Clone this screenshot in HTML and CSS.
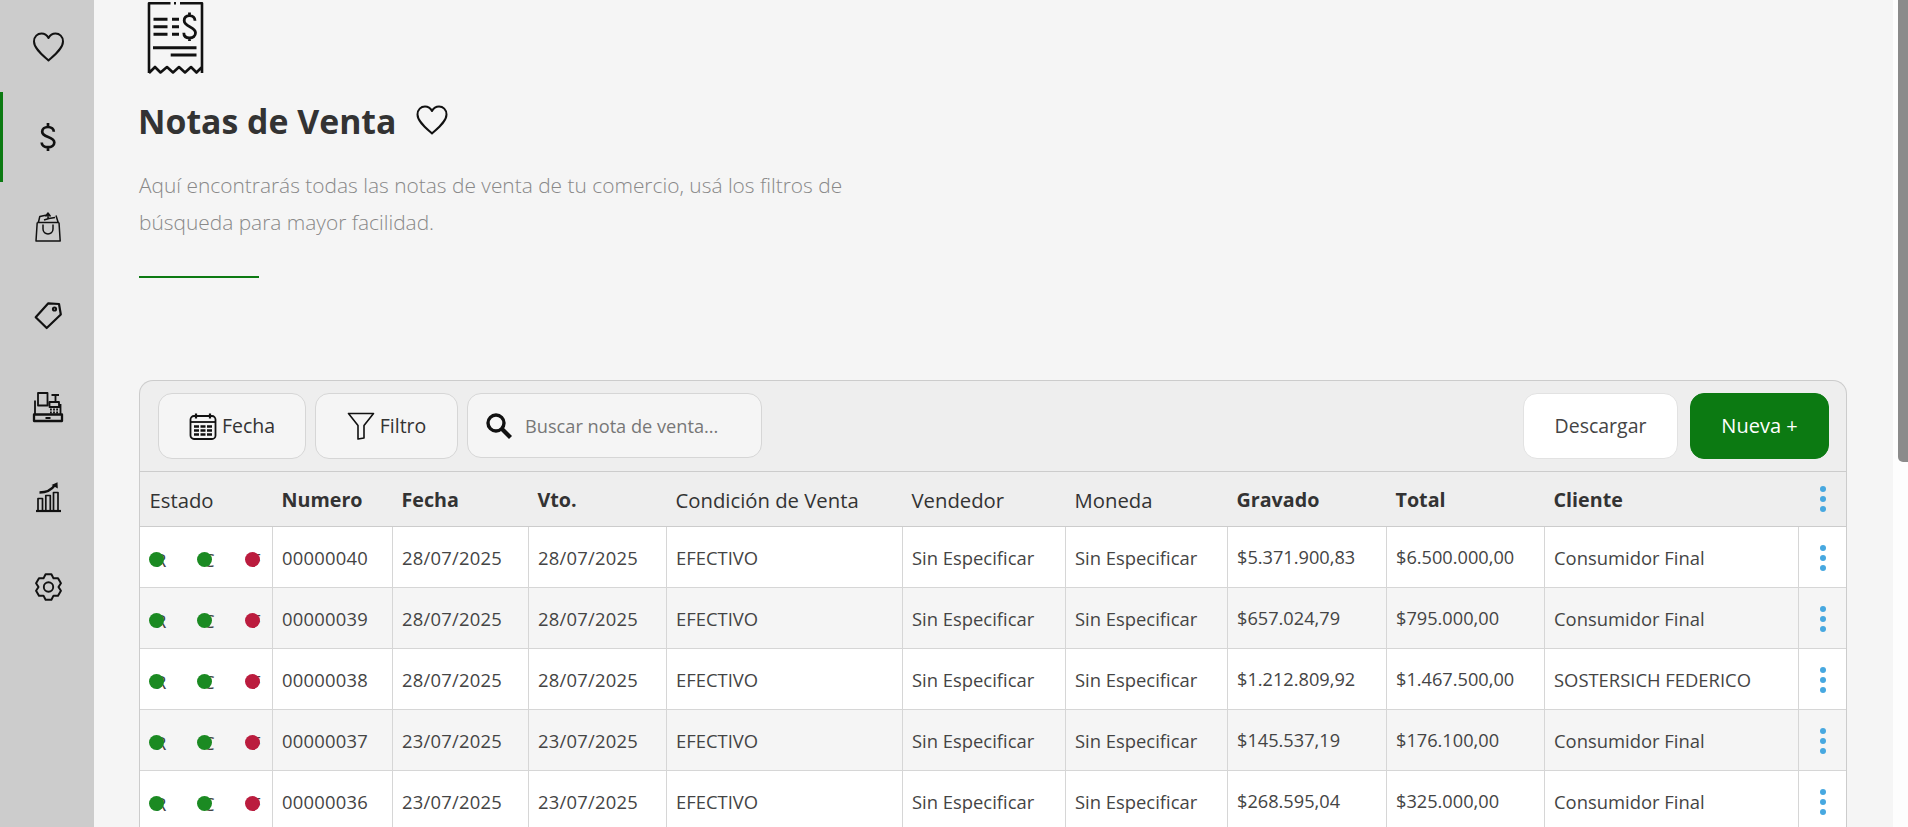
FILE: index.html
```html
<!DOCTYPE html>
<html lang="es">
<head>
<meta charset="utf-8">
<title>Notas de Venta</title>
<link rel="stylesheet" href="styles.css">
</head>
<body>
<div class="app">
  <nav class="sidebar">
    <a class="nav-item"><svg width="32" height="32" viewBox="0.5 0 32 32"><path class="ln" d="M16 29.500C10 24 1.500 17.500 1.500 10.500 1.500 5.500 5 2.500 9 2.500c3 0 5.500 1.700 7 4.500 1.500-2.800 4-4.500 7-4.500 4 0 7.500 3 7.500 8 0 7-8.500 13.500-14.500 19Z" stroke-width="2"/></svg></a>
    <a class="nav-item nav-item-active"><svg width="32" height="32" viewBox="1 0 32 32"><path class="ln" d="M21.800 10.800C21.800 7.900 19.400 6 16 6s-5.800 1.900-5.800 4.700c0 6.300 12.100 4.300 12.100 10.800 0 2.800-2.600 4.700-6.300 4.700s-6.300-1.900-6.300-4.700M16 2v4M16 26.200V30" stroke-width="2.700"/></svg></a>
    <a class="nav-item"><svg width="26" height="30" viewBox="1 0 26 30"><path class="ln" d="M2.200 10.500 1 29h24.200L24 10.500M8 12.500v4.500c0 6.500 10 6.500 10 0v-4.500M2.200 10.500H24M3.500 10 4.800 4.500l7-1.500M21 3.500l2 6.500M13 1.500v6M10.500 4.500 13 1l2.500 3.500M9 8l5-1.500 6-1" stroke-width="1.500"/></svg></a>
    <a class="nav-item"><svg width="28" height="27" viewBox="1 2 28 27"><path class="ln" d="M14.300 1.300 25 2l1.800 10.500L12.700 26 1.700 15.300Z" stroke-width="2.200"/><circle class="ln" cx="20.500" cy="7" r="1.600" stroke-width="2"/></svg></a>
    <a class="nav-item"><svg width="30" height="30" viewBox="1 0 30 30"><path class="ln" d="M2 8.500V22M5 1h9.500v12.500H5ZM16.500 10h9.500v5h-9.500ZM18.500 3h7.500M22.500 3v7M27.500 12v10" stroke-width="1.800"/><path class="ln" d="M1 22.500h28V29H1Z" stroke-width="2.300"/><path class="ln" d="M12.500 26h5" stroke-width="2"/><path class="ln" d="M17 17.500h9M17 20.500h9" stroke-width="1.800" stroke-dasharray="1.800 1.300"/></svg></a>
    <a class="nav-item"><svg width="26" height="30" viewBox="0 0 26 30"><path class="ln" d="M0 29h25" stroke-width="2.200"/><path class="ln" d="M2 28.500V16.500h4.500v12M9.800 28.500V13.500h4.500v15M17.500 28.500V10.500H22v18" stroke-width="1.700"/><path class="ln" d="M3.500 10.500c6.500 0 12-2.500 15.500-7.500" stroke-width="2.300"/><path class="fl" d="M15.500 3 21.500.3l.3 6.200Z"/></svg></a>
    <a class="nav-item"><svg width="28" height="28" viewBox="0.5 0 28 28"><circle class="ln" cx="14" cy="14" r="4.700" stroke-width="1.900"/><path class="ln" d="M11.080 1.330H16.920L19 5.340 23.510 5.130 26.430 10.200 24 14 26.430 17.800 23.510 22.870 19 22.660 16.920 26.670H11.080L9 22.660 4.490 22.870 1.570 17.800 4 14 1.570 10.200 4.490 5.130 9 5.340Z" stroke-width="2"/></svg></a>
  </nav>
  <main class="main">
    <header class="page-head">
      <svg class="receipt" width="58" height="75" viewBox="0 0 58 75"><path class="ln" d="M2 73V3.200H23.500M27 3.200H29M33 3.200H55V73M2 73 8 67 13.500 72.500 20 67 26 72.500 32 67 38 72.500 44 67 49.500 72.500 55 67" stroke-width="2.600"/><path class="ln" d="M6.500 19.300h14M6.500 26.700h14M6.500 34.300h14M25 19.300h7M25 26.700h7M25 34.300h7M6 47.700h43.500M23.700 55h25.800" stroke-width="3"/><path class="ln" d="M48 20.800C48 17.500 45.800 15.700 42.500 15.700S37.200 17.700 37.200 20.800C37.200 27.300 48.500 26 48.500 32.800 48.500 36 46 38 42.500 38S36.800 36 36.800 32.800M42.500 12.500V15.700M42.500 38V41" stroke-width="2.800"/></svg>
      <div class="title-row">
        <h1 class="title">Notas de Venta</h1>
        <svg class="title-heart" width="32" height="32" viewBox="0 0 32 32"><path class="ln" d="M16 29.500C10 24 1.500 17.500 1.500 10.500 1.500 5.500 5 2.500 9 2.500c3 0 5.500 1.700 7 4.500 1.500-2.800 4-4.500 7-4.500 4 0 7.500 3 7.500 8 0 7-8.500 13.500-14.500 19Z" stroke-width="2"/></svg>
      </div>
      <p class="desc">Aquí encontrarás todas las notas de venta de tu comercio, usá los filtros de<br>búsqueda para mayor facilidad.</p>
      <div class="rule"></div>
    </header>
    <section class="panel">
      <div class="toolbar">
        <button class="btn btn-fecha"><svg width="28" height="28" viewBox="0 0 28 28"><rect class="ln" x="1.500" y="4" width="25" height="23" rx="3.500" stroke-width="1.800"/><path class="ln" d="M1.500 10h25" stroke-width="1.800"/><path class="ln" d="M7 1.500v5M21 1.500v5" stroke-width="2.200"/><path class="ln" d="M5 14.500h18M5 18.500h18M5 22.500h18" stroke-width="2.600" stroke-dasharray="5 1.500"/></svg>Fecha</button>
        <button class="btn btn-filtro"><svg width="28" height="28" viewBox="0 0 28 28"><path class="ln" d="M1.500 1.500h25L17 13.500v12.500l-6 1V13.500L1.500 1.500Z" stroke-width="1.600"/></svg>Filtro</button>
        <label class="search"><svg width="28" height="28" viewBox="0 0 28 28"><circle class="ln" cx="11" cy="11" r="8" stroke-width="3.400"/><path class="ln" d="m17 17 8.500 8.500" stroke-width="4.200"/></svg><span class="search-ph">Buscar nota de venta...</span></label>
        <div class="spacer"></div>
        <button class="btn btn-white">Descargar</button>
        <button class="btn btn-green">Nueva +</button>
      </div>
      <table class="grid">
        <colgroup>
          <col class="c-estado"><col class="c-num"><col class="c-fecha"><col class="c-vto"><col class="c-cond"><col class="c-vend"><col class="c-mon"><col class="c-grav"><col class="c-total"><col class="c-cli"><col class="c-act">
        </colgroup>
        <thead>
          <tr>
            <th class="th-mid">Estado</th><th>Numero</th><th>Fecha</th><th>Vto.</th><th class="th-mid">Condición de Venta</th><th class="th-mid">Vendedor</th><th class="th-mid">Moneda</th><th>Gravado</th><th>Total</th><th>Cliente</th>
            <th class="act"><span class="kebab"><i></i><i></i><i></i></span></th>
          </tr>
        </thead>
        <tbody>
          <tr>
            <td class="states"><span class="st st-g">R</span><span class="st st-g">C</span><span class="st st-r">F</span></td>
            <td>00000040</td><td>28/07/2025</td><td>28/07/2025</td><td>EFECTIVO</td><td>Sin Especificar</td><td>Sin Especificar</td><td>$5.371.900,83</td><td>$6.500.000,00</td><td>Consumidor Final</td>
            <td class="act"><span class="kebab"><i></i><i></i><i></i></span></td>
          </tr>
          <tr>
            <td class="states"><span class="st st-g">R</span><span class="st st-g">C</span><span class="st st-r">F</span></td>
            <td>00000039</td><td>28/07/2025</td><td>28/07/2025</td><td>EFECTIVO</td><td>Sin Especificar</td><td>Sin Especificar</td><td>$657.024,79</td><td>$795.000,00</td><td>Consumidor Final</td>
            <td class="act"><span class="kebab"><i></i><i></i><i></i></span></td>
          </tr>
          <tr>
            <td class="states"><span class="st st-g">R</span><span class="st st-g">C</span><span class="st st-r">F</span></td>
            <td>00000038</td><td>28/07/2025</td><td>28/07/2025</td><td>EFECTIVO</td><td>Sin Especificar</td><td>Sin Especificar</td><td>$1.212.809,92</td><td>$1.467.500,00</td><td>SOSTERSICH FEDERICO</td>
            <td class="act"><span class="kebab"><i></i><i></i><i></i></span></td>
          </tr>
          <tr>
            <td class="states"><span class="st st-g">R</span><span class="st st-g">C</span><span class="st st-r">F</span></td>
            <td>00000037</td><td>23/07/2025</td><td>23/07/2025</td><td>EFECTIVO</td><td>Sin Especificar</td><td>Sin Especificar</td><td>$145.537,19</td><td>$176.100,00</td><td>Consumidor Final</td>
            <td class="act"><span class="kebab"><i></i><i></i><i></i></span></td>
          </tr>
          <tr>
            <td class="states"><span class="st st-g">R</span><span class="st st-g">C</span><span class="st st-r">F</span></td>
            <td>00000036</td><td>23/07/2025</td><td>23/07/2025</td><td>EFECTIVO</td><td>Sin Especificar</td><td>Sin Especificar</td><td>$268.595,04</td><td>$325.000,00</td><td>Consumidor Final</td>
            <td class="act"><span class="kebab"><i></i><i></i><i></i></span></td>
          </tr>
        </tbody>
      </table>
    </section>
  </main>
  <div class="scrolltrack"><div class="scrollthumb"></div></div>
</div>
</body>
</html>
```
FILE: styles.css
```css
* { box-sizing: border-box; }
html, body { margin: 0; height: 100%; overflow: hidden; }
body { font-family: "Open Sans", "Noto Sans", sans-serif; color: #333; background: #f5f5f5; }
.ln { fill: none; stroke: #111; stroke-linejoin: round; }
.fl { fill: #111; }
.app { display: flex; height: 827px; overflow: hidden; }

.sidebar { width: 94px; flex: none; background: #ccc; padding-top: 2px; display: flex; flex-direction: column; }
.nav-item { height: 90px; flex: none; display: flex; align-items: center; justify-content: center; border-left: 3px solid transparent; }
.nav-item svg { overflow: visible; }
.nav-item-active { border-left-color: #0c7a12; }

.main { flex: 1; min-width: 0; padding: 0 46px 0 45px; }
.page-head { display: flex; flex-direction: column; align-items: flex-start; }
.receipt { margin-left: 8px; display: block; }
.title-row { display: flex; align-items: center; gap: 20px; margin-top: 17px; height: 58px; }
.title { margin: 0 0 0 -1px; font-size: 33.800px; font-weight: 700; line-height: 58px; color: #333; }
.title-heart { margin-top: -3px; }
.desc { margin: 16.500px 0 0; font-size: 20.900px; font-weight: 300; line-height: 37.500px; color: #888; }
.rule { width: 120px; height: 2px; background: #0c7a12; margin-top: 34.500px; }

.panel { margin-top: 101.500px; border: 1.500px solid #ccc; border-bottom: 0; border-radius: 14px 14px 0 0; background: #eee; }
.toolbar { display: flex; align-items: center; gap: 9px; height: 90.500px; padding: 0 17px 0 18px; }
.spacer { flex: 1; }
.btn { height: 66px; border: 1.500px solid #d6d6d6; border-radius: 14px; background: #f5f5f5; color: #333; font: 500 19.500px "Open Sans", sans-serif; display: inline-flex; align-items: center; justify-content: center; gap: 5px; padding: 0; }
.btn-fecha { width: 148px; }
.btn-filtro { width: 143px; }
.search { width: 295px; height: 65px; border: 1.500px solid #d6d6d6; border-radius: 14px; background: #f5f5f5; display: flex; align-items: center; gap: 12px; padding-left: 17px; }
.search-ph { font-size: 18.200px; color: #777; }
.btn-white { width: 155px; background: #fff; border-color: #e2e2e2; color: #444; font-weight: 400; }
.btn-green { width: 139px; background: #0c7a12; border-color: #0c7a12; color: #fff; margin-left: 3px; font-weight: 400; font-size: 20px; }

.grid { width: 100%; border-collapse: collapse; table-layout: fixed; background: #fff; font-size: 18.400px; }
.c-estado { width: 132px; }
.c-num { width: 120px; }
.c-fecha { width: 136px; }
.c-vto { width: 138px; }
.c-cond { width: 236px; }
.c-vend { width: 163px; }
.c-mon { width: 162px; }
.c-grav { width: 159px; }
.c-total { width: 158px; }
.c-cli { width: 254px; }
.grid th { height: 55px; background: #eee; text-align: left; font-weight: 700; font-size: 19.700px; padding: 1px 9px 0 9.500px; border-top: 1.500px solid #ccc; border-bottom: 1.500px solid #ccc; color: #333; }
.grid .th-mid { font-weight: 500; font-size: 20.300px; }
.grid td { height: 61px; padding: 0 9px 0 9.500px; border-top: 1.500px solid #d6d6d6; border-left: 1.500px solid #d6d6d6; color: #444; white-space: nowrap; }
.grid td:first-child { border-left: 0; }
.grid td:nth-child(2), .grid td:nth-child(3), .grid td:nth-child(4) { letter-spacing: .25px; }
.grid td:nth-child(8), .grid td:nth-child(9) { font-size: 18.200px; }
.grid tbody tr:nth-child(even) td { background: #f5f5f5; }
.grid tbody tr:first-child td { border-top: 0; }
.grid .states { padding: 0; }
.st { position: relative; display: inline-block; width: 48px; padding-left: 15px; line-height: 20px; vertical-align: middle; }
.st::before { content: ""; position: absolute; left: 9px; top: 2px; width: 15px; height: 15px; border-radius: 50%; }
.st-g::before { background: #1b8a22; }
.st-r::before { background: #bb1c3e; }
.grid .act { text-align: center; padding: 0 0 0 1.500px; }
.grid th.act { padding-bottom: 2px; }
.kebab { display: inline-flex; flex-direction: column; gap: 4px; vertical-align: middle; }
.kebab i { width: 6px; height: 6px; border-radius: 50%; background: #47a8e0; display: block; }

.scrolltrack { width: 15px; flex: none; background: #fdfdfd; display: flex; justify-content: flex-end; }
.scrollthumb { width: 10px; height: 462px; background: #8b8b8b; border-radius: 0 0 0 5px; }
```
